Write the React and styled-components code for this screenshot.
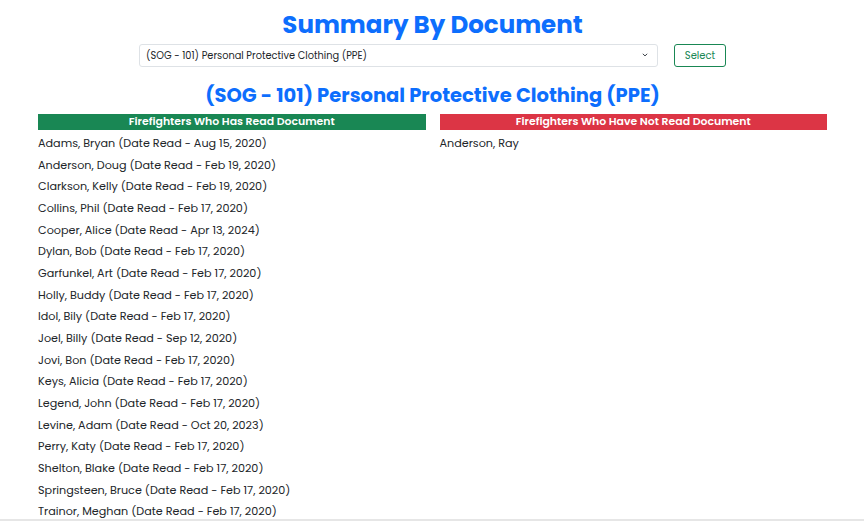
import styled, { createGlobalStyle } from "styled-components";

const GlobalStyle = createGlobalStyle`
    html, body {
        margin: 0;
        padding: 0;
        background: #ffffff;
        font-family: "Poppins", "Inter", "Noto Sans", sans-serif;
        color: #212529;
    }
`;

const docs = ["(SOG - 101) Personal Protective Clothing (PPE)"];

const readList = [
    ["Adams, Bryan", "Aug 15, 2020"],
    ["Anderson, Doug", "Feb 19, 2020"],
    ["Clarkson, Kelly", "Feb 19, 2020"],
    ["Collins, Phil", "Feb 17, 2020"],
    ["Cooper, Alice", "Apr 13, 2024"],
    ["Dylan, Bob", "Feb 17, 2020"],
    ["Garfunkel, Art", "Feb 17, 2020"],
    ["Holly, Buddy", "Feb 17, 2020"],
    ["Idol, Bily", "Feb 17, 2020"],
    ["Joel, Billy", "Sep 12, 2020"],
    ["Jovi, Bon", "Feb 17, 2020"],
    ["Keys, Alicia", "Feb 17, 2020"],
    ["Legend, John", "Feb 17, 2020"],
    ["Levine, Adam", "Oct 20, 2023"],
    ["Perry, Katy", "Feb 17, 2020"],
    ["Shelton, Blake", "Feb 17, 2020"],
    ["Springsteen, Bruce", "Feb 17, 2020"],
    ["Trainor, Meghan", "Feb 17, 2020"],
];

const notReadList = ["Anderson, Ray"];

function App() {
    return (
        <>
            <GlobalStyle />
            <Page>
                <Title>Summary By Document</Title>
                <PickerRow>
                    <SelectWrap>
                        <DocSelect defaultValue={docs[0]}>
                            {docs.map((d) => (
                                <option key={d}>{d}</option>
                            ))}
                        </DocSelect>
                        <Chevron viewBox="0 0 16 16">
                            <path d="M5 6.5 L8 9.5 L11 6.5" fill="none" stroke="#343a40" strokeWidth="1.6" strokeLinecap="round" strokeLinejoin="round" />
                        </Chevron>
                    </SelectWrap>
                    <SelectButton>Select</SelectButton>
                </PickerRow>
                <DocTitle>{docs[0]}</DocTitle>
                <Columns>
                    <Column>
                        <ColumnHeader $tone="read">Firefighters Who Has Read Document</ColumnHeader>
                        {readList.map(([name, date]) => (
                            <Entry key={name}>
                                {name} (Date Read - {date})
                            </Entry>
                        ))}
                    </Column>
                    <Column>
                        <ColumnHeader $tone="unread">Firefighters Who Have Not Read Document</ColumnHeader>
                        {notReadList.map((name) => (
                            <Entry key={name}>{name}</Entry>
                        ))}
                    </Column>
                </Columns>
            </Page>
        </>
    );
}

export default App;

const Page = styled.div`
    height: 521px;
    overflow: hidden;
    padding: 0 37px 0 38px;
    box-sizing: border-box;
    border-bottom: 2px solid #e6e6e6;
`;

const Title = styled.h1`
    margin: 0;
    padding-top: 9px;
    text-align: center;
    font-size: 24.5px;
    line-height: 32px;
    font-weight: 700;
    color: #0d6efd;
`;

const PickerRow = styled.div`
    display: flex;
    justify-content: center;
    align-items: center;
    gap: 16px;
    margin-top: 3px;
`;

const SelectWrap = styled.div`
    position: relative;
    width: 519px;
    height: 23px;
`;

const DocSelect = styled.select`
    display: block;
    appearance: none;
    width: 100%;
    height: 100%;
    border: 1px solid #dee2e6;
    border-radius: 3px;
    background: #fff;
    padding: 0 24px 0 6px;
    font-family: inherit;
    font-size: 9.8px;
    color: #212529;
    outline: none;
`;

const Chevron = styled.svg`
    position: absolute;
    right: 8px;
    top: 6px;
    width: 10px;
    height: 10px;
    pointer-events: none;
`;

const SelectButton = styled.button`
    width: 52px;
    height: 23px;
    border: 1px solid #198754;
    border-radius: 3px;
    background: #fff;
    color: #198754;
    font-family: inherit;
    font-size: 10px;
    padding: 0;
    cursor: pointer;
`;

const DocTitle = styled.h2`
    margin: 17px 0 0;
    text-align: center;
    font-size: 19.5px;
    line-height: 24px;
    font-weight: 700;
    color: #0d6efd;
`;

const Columns = styled.div`
    display: grid;
    grid-template-columns: 1fr 1fr;
    gap: 14px;
    margin-top: 6px;
`;

const Column = styled.div`
    display: flex;
    flex-direction: column;
`;

const ColumnHeader = styled.div`
    height: 16px;
    line-height: 16px;
    text-align: center;
    font-size: 10.9px;
    font-weight: 600;
    color: #fff;
    background: ${(props) => (props.$tone === "read" ? "#198754" : "#dc3545")};
    margin-bottom: 3px;
`;

const Entry = styled.div`
    font-size: 11.2px;
    line-height: 21.65px;
    color: #212529;
`;
